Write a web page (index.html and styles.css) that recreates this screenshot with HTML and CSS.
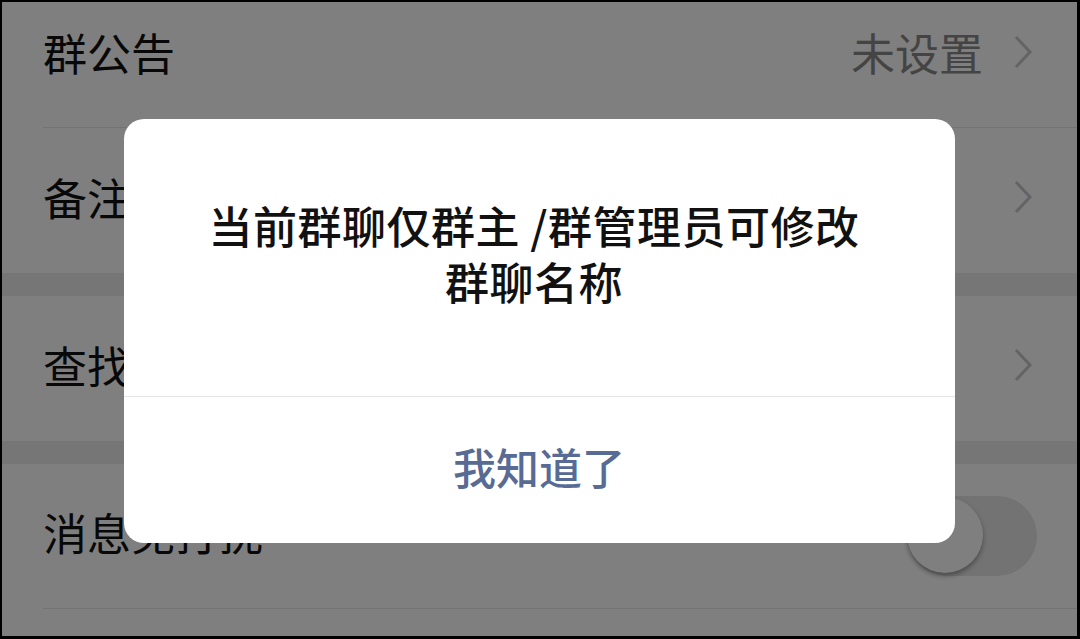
FILE: index.html
```html
<!DOCTYPE html>
<html lang="zh-CN">
<head>
<meta charset="utf-8">
<title>群聊信息</title>
<link rel="stylesheet" href="styles.css">
</head>
<body>
<div class="screen">
  <div class="list">
    <div class="group">
      <div class="row first">
        <div class="row-body">
          <span class="label">群公告</span>
          <span class="value">未设置</span>
          <svg class="chev" viewBox="0 0 20 34"><polyline points="3,2 17,17 3,32"/></svg>
        </div>
      </div>
      <div class="row">
        <div class="row-body last">
          <span class="label">备注</span>
          <span class="value"></span>
          <svg class="chev" viewBox="0 0 20 34"><polyline points="3,2 17,17 3,32"/></svg>
        </div>
      </div>
    </div>
    <div class="group">
      <div class="row">
        <div class="row-body last">
          <span class="label">查找聊天记录</span>
          <span class="value"></span>
          <svg class="chev" viewBox="0 0 20 34"><polyline points="3,2 17,17 3,32"/></svg>
        </div>
      </div>
    </div>
    <div class="group">
      <div class="row">
        <div class="row-body">
          <span class="label">消息免打扰</span>
          <span class="value"></span>
          <span class="switch"><span class="knob"></span></span>
        </div>
      </div>
      <div class="row">
        <div class="row-body last"></div>
      </div>
    </div>
  </div>

  <div class="mask">
    <div class="dialog">
      <div class="dialog-body">
        <div class="dialog-text">
          <div class="dialog-line">当前群聊仅群主 /群管理员可修改</div>
          <div class="dialog-line">群聊名称</div>
        </div>
      </div>
      <div class="dialog-foot">
        <span class="btn">我知道了</span>
      </div>
    </div>
  </div>
</div>
</body>
</html>
```

FILE: styles.css
```css
* { box-sizing: border-box; }

html, body {
  margin: 0;
  padding: 0;
  background: #000;
}

body {
  font-family: "Noto Sans CJK SC", "Noto Sans", sans-serif;
  width: 1080px;
  height: 639px;
  overflow: hidden;
}

.screen {
  position: relative;
  margin: 2px 3px 0 2px;
  height: 634px;
  overflow: hidden;
  background: #ededed;
}

.list {
  margin-top: -18px;
  display: flex;
  flex-direction: column;
  gap: 23px;
}

.group {
  background: #fff;
  display: flex;
  flex-direction: column;
}

.row {
  padding-left: 41px;
  height: 145px;
  display: flex;
}

.row.first { height: 144px; }

.row-body {
  flex: 1;
  display: flex;
  align-items: center;
  border-bottom: 1px solid #e6e6e6;
  padding-right: 44px;
  padding-bottom: 8px;
}

.row-body.last { border-bottom: none; }

.label {
  flex: 1;
  font-size: 44px;
  line-height: 60px;
  color: #111;
  white-space: nowrap;
}

.value {
  font-size: 44px;
  line-height: 60px;
  color: #888;
  margin-right: 30px;
}

.chev {
  width: 20px;
  height: 34px;
  fill: none;
  stroke: #c8c8cc;
  stroke-width: 3;
}

.switch {
  position: relative;
  width: 130px;
  height: 80px;
  border-radius: 40px;
  background: #e6e6e6;
  margin-right: -4px;
  margin-top: 8px;
}

.knob {
  position: absolute;
  left: 0;
  top: 1px;
  width: 76px;
  height: 76px;
  border-radius: 50%;
  background: #fff;
  box-shadow: 0 3px 5px rgba(0, 0, 0, 0.35);
}

.mask {
  position: absolute;
  inset: 0;
  background: rgba(0, 0, 0, 0.5);
  display: flex;
  justify-content: center;
  align-items: flex-start;
  padding-top: 117px;
  padding-right: 1px;
}

.dialog {
  width: 831px;
  height: 424px;
  background: #fff;
  border-radius: 20px;
  display: flex;
  flex-direction: column;
  overflow: hidden;
}

.dialog-body {
  height: 278px;
  display: flex;
  align-items: center;
  justify-content: center;
  border-bottom: 1px solid #e5e5e5;
  padding-bottom: 10px;
  padding-right: 10px;
}

.dialog-text {
  display: flex;
  flex-direction: column;
  align-items: center;
  font-size: 44px;
  font-weight: 500;
  color: #111;
  letter-spacing: 0.5px;
}

.dialog-line {
  height: 56px;
  line-height: 56px;
  white-space: nowrap;
}

.dialog-foot {
  flex: 1;
  display: flex;
  align-items: center;
  justify-content: center;
  padding-bottom: 8px;
}

.btn {
  font-size: 43px;
  font-weight: 500;
  color: #576b95;
}
```
